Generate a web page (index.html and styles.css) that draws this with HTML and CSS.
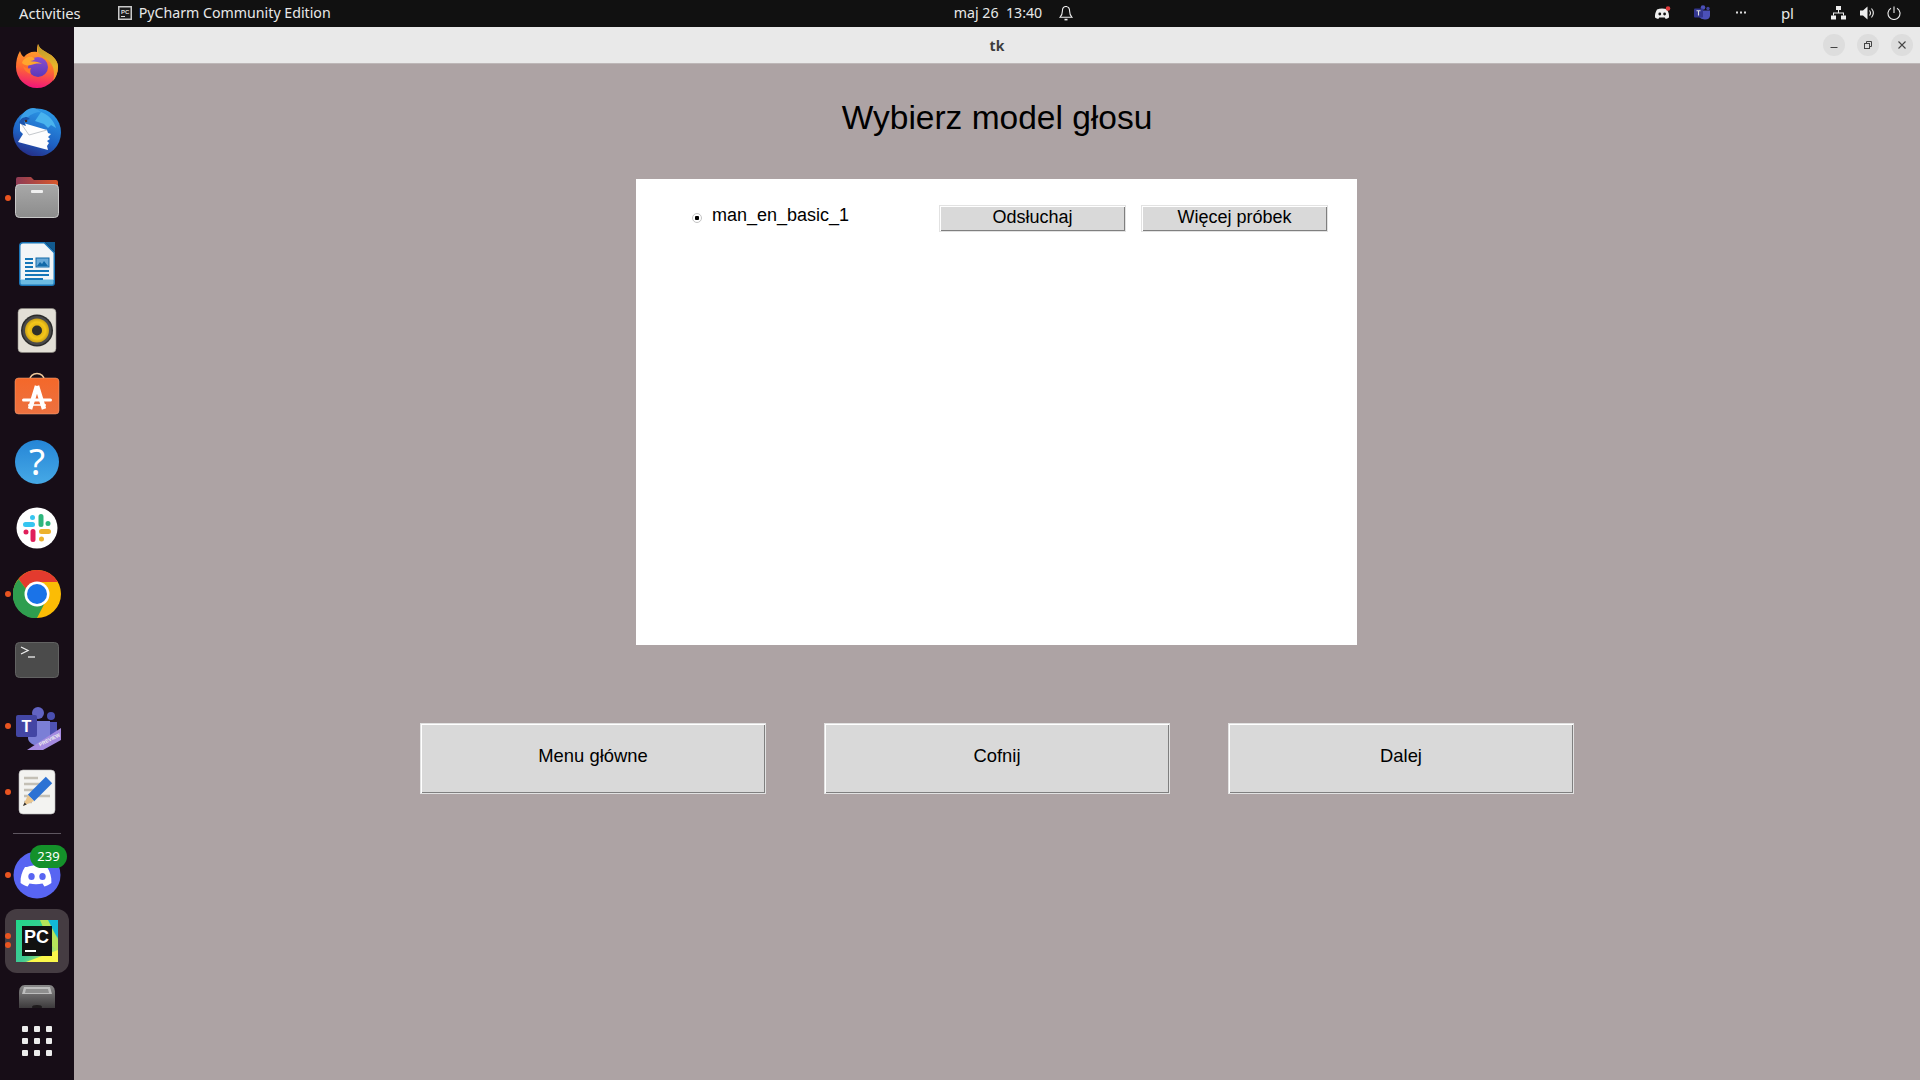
FILE: index.html
```html
<!DOCTYPE html>
<html lang="en">
<head>
    <meta charset="UTF-8">
    <meta name="viewport" content="width=device-width, initial-scale=1.0">
    <title>tk</title>
    <link rel="stylesheet" href="styles.css">
</head>
<body>
    <!-- Top bar -->
    <header class="topbar">
        <span class="activities">Activities</span>
        <svg class="app-glyph" width="14" height="14" viewBox="0 0 14 14">
            <rect width="14" height="14" fill="#c9c9c9"/>
            <rect x="1.500" y="1.500" width="11" height="11" fill="#1c1c1c"/>
            <text x="3" y="7.500" font-size="6" font-weight="700" fill="#ddd" font-family="Liberation Sans">PC</text>
            <rect x="3" y="10" width="4" height="1" fill="#ddd"/>
        </svg>
        <span class="app-name">PyCharm Community Edition</span>
        <span class="clock">maj 26&nbsp;&nbsp;13:40</span>
        <svg class="bell" width="14" height="16" viewBox="0 0 14 16" fill="none" stroke="#eee" stroke-width="1.100">
            <path d="M6 1.500h2M7 1.500c-2.600 0-3.600 2-3.600 4.500 0 3-1 5-2.400 6.300h12c-1.400-1.300-2.400-3.300-2.400-6.300 0-2.500-1-4.500-3.600-4.500z"/>
            <path d="M5.500 14.600h3" stroke-width="1.600"/>
        </svg>
        <div class="tray">
            <svg class="tray-discord" width="17" height="14" viewBox="0 0 17 14">
                <path d="M3 3.500c3-1.300 7-1.300 10 0 1.500 2.500 2.200 5 2 8-1.200.9-2.300 1.300-3.300 1.500l-.9-1.400h-5.600l-.9 1.400c-1-.2-2.100-.6-3.300-1.500-.2-3 .5-5.500 2-8z" fill="#eee"/>
                <circle cx="5.800" cy="8" r="1.400" fill="#111"/>
                <circle cx="10.600" cy="8" r="1.400" fill="#111"/>
                <circle cx="14" cy="2.500" r="2.300" fill="#e03c3c"/>
            </svg>
            <svg class="tray-teams" width="17" height="15" viewBox="0 0 17 15">
                <circle cx="9" cy="2.500" r="2.300" fill="#4b50b8"/>
                <circle cx="14" cy="3.500" r="1.700" fill="#3e429c"/>
                <path d="M5 5.500h11v5c0 2.500-2 4-4.500 4s-6.500-1-6.500-4z" fill="#4b50b8"/>
                <rect y="3.500" width="9" height="9" rx="1" fill="#33368f"/>
                <path d="M2.500 5.800h4M4.500 5.800v4.800" stroke="#ddd" stroke-width="1.100"/>
            </svg>
            <svg class="tray-more" width="10" height="3" viewBox="0 0 10 3" fill="#ddd">
                <rect width="2" height="2" y=".5"/><rect x="4" width="2" height="2" y=".5"/><rect x="8" width="2" height="2" y=".5"/>
            </svg>
            <span class="tray-lang">pl</span>
            <svg class="tray-net" width="15" height="14" viewBox="0 0 15 14" fill="#eee">
                <rect x="5" width="5" height="4"/><rect y="9.500" width="5" height="4"/><rect x="10" y="9.500" width="5" height="4"/>
                <path d="M7 4h1v2.500h5v3h-1v-2h-9v2h-1v-3h5z"/>
            </svg>
            <svg class="tray-vol" width="15" height="14" viewBox="0 0 15 14">
                <path d="M0 4.500h3l4.500-4v13l-4.500-4h-3z" fill="#eee"/>
                <path d="M9.500 4.500c1.200 1.500 1.200 3.500 0 5M11.500 2.500c2.300 2.800 2.300 6.200 0 9" fill="none" stroke="#eee" stroke-width="1.100"/>
            </svg>
            <svg class="tray-power" width="14" height="14" viewBox="0 0 14 14" fill="none" stroke="#eee" stroke-width="1.100">
                <path d="M4 2.300a6 6 0 1 0 6 0"/>
                <path d="M7 .5v6.500"/>
            </svg>
        </div>
    </header>

    <div class="desktop">
        <!-- Dock -->
        <nav class="dock">
            <div class="dock-item">
                <svg width="48" height="48" viewBox="0 0 48 48">
                    <defs>
                        <linearGradient id="ffBody" x1="0.600" y1="0" x2="0.450" y2="1">
                            <stop offset="0" stop-color="#ffb02e"/><stop offset="0.550" stop-color="#ff6f2e"/><stop offset="1" stop-color="#f0147a"/>
                        </linearGradient>
                        <linearGradient id="ffGold" x1="0" y1="0" x2="0" y2="1">
                            <stop offset="0" stop-color="#b8962c"/><stop offset="0.600" stop-color="#e8b52a"/><stop offset="1" stop-color="#ff8a2e"/>
                        </linearGradient>
                        <linearGradient id="ffCore" x1="0.500" y1="0" x2="0.500" y2="1">
                            <stop offset="0" stop-color="#8a4fd0"/><stop offset="1" stop-color="#5b38b8"/>
                        </linearGradient>
                    </defs>
                    <path d="M7 9c1 3 2 5 4 6 3-4 8-6 13-5 0-3 0-6 1-8 2 6 7 7 13 11 5 4 7 8 7 12A21 21 0 0 1 3 25c0-6 1-11 4-16z" fill="url(#ffBody)"/>
                    <path d="M25 2c2 6 7 7 13 11 5 4 7 8 7 12 0 6-2 10-5 14 2-7 1-14-3-19-4-4-9-5-12-10z" fill="url(#ffGold)"/>
                    <circle cx="25" cy="25" r="10" fill="url(#ffCore)"/>
                    <path d="M9 21c1-4 6-7 10-6l3 2c-1 1-3 2-5 2 3 1 8 0 12 3-4-1-8 0-11 1-4 1-7 0-9-2z" fill="#ffa62e"/>
                    <path d="M10 24c2 2 5 3 8 2-1 2-1 4 0 6-4-1-7-4-8-8z" fill="#ff7a2e"/>
                </svg>
            </div>
            <div class="dock-item">
                <svg width="48" height="48" viewBox="0 0 48 48">
                    <defs>
                        <linearGradient id="tbBody" x1="0.700" y1="0" x2="0.300" y2="1">
                            <stop offset="0" stop-color="#2c9be8"/><stop offset="0.600" stop-color="#1e62c4"/><stop offset="1" stop-color="#252b84"/>
                        </linearGradient>
                    </defs>
                    <circle cx="24" cy="24.500" r="24" fill="url(#tbBody)"/>
                    <path d="M7 12C9 5 14 0 20 0c3 0 5 2 8 4-5 0-10 2-13 5l-5 8z" fill="#3a9fe8"/>
                    <path d="M28 4c8 3 13 9 15 16l-5-3-3 3-4-4-9-3z" fill="#49b3ee"/>
                    <path d="M7 14l27 8 1 3 3 1-3 3 2 2-3 2 2 2-2 3 1 4-30-8 5-8-3-3z" fill="#fdfdfd"/>
                    <path d="M7 14l9 13 18-5" fill="none" stroke="#c4c8cc" stroke-width="1"/>
                    <path d="M6 15c1-4 4-6 8-6l3 2-6 2 2 5-3-1z" fill="#1c55ad"/>
                    <circle cx="13" cy="13" r="1.300" fill="#4a2a1c"/>
                </svg>
            </div>
            <div class="dock-item has-dot">
                <svg width="48" height="48" viewBox="0 0 48 48">
                    <defs>
                        <linearGradient id="folderTab" x1="0" y1="0" x2="1" y2="0">
                            <stop offset="0" stop-color="#8e3b55"/><stop offset="1" stop-color="#d9582c"/>
                        </linearGradient>
                        <linearGradient id="folderFace" x1="0" y1="0" x2="0" y2="1">
                            <stop offset="0" stop-color="#a8a8a8"/><stop offset="1" stop-color="#8c8c8c"/>
                        </linearGradient>
                    </defs>
                    <path d="M3 5a2 2 0 0 1 2-2h13l3 3h22a2 2 0 0 1 2 2v10H3z" fill="url(#folderTab)"/>
                    <rect x="2.500" y="10.500" width="43" height="33" rx="4" fill="url(#folderFace)" stroke="#c8c8c8" stroke-width="1"/>
                    <rect x="18" y="16" width="12" height="3" rx="1" fill="#f0f0f0"/>
                </svg>
            </div>
            <div class="dock-item">
                <svg width="48" height="48" viewBox="0 0 48 48">
                    <path d="M10 2h22l10 10v31a3 3 0 0 1-3 3H9a3 3 0 0 1-3-3V6a4 4 0 0 1 4-4z" fill="#1b76b8"/>
                    <path d="M10 3.500h21l9.500 9.500v27H7.500V6A2.500 2.500 0 0 1 10 3.500z" fill="#f2f5f7"/>
                    <path d="M7.500 39.500h33V43a1.500 1.500 0 0 1-1.500 1.500H9A1.500 1.500 0 0 1 7.500 43z" fill="#6dbbe2"/>
                    <path d="M32 2h10v10z" fill="#125a8f"/>
                    <rect x="23" y="18" width="13" height="9" fill="#6aaad8" stroke="#136aa8"/>
                    <path d="M24 26l3-4 2 2 2-3 4 5z" fill="#136aa8"/>
                    <path d="M12 19h8M12 23h8M12 27h8M12 31h24M12 35h24M12 39h18" stroke="#1576b8" stroke-width="1.800"/>
                </svg>
            </div>
            <div class="dock-item">
                <svg width="48" height="48" viewBox="0 0 48 48">
                    <defs>
                        <radialGradient id="rbCone">
                            <stop offset="0" stop-color="#c79a10"/><stop offset="0.700" stop-color="#f5c71a"/><stop offset="1" stop-color="#caa015"/>
                        </radialGradient>
                    </defs>
                    <rect x="5" y="2.500" width="38" height="44" rx="4" fill="#e3dfd6" stroke="#8a8880" stroke-width=".6"/>
                    <circle cx="24" cy="24.500" r="16" fill="#2b2b2b"/>
                    <circle cx="24" cy="24.500" r="14.500" fill="#4a4a4a"/>
                    <circle cx="24" cy="24.500" r="12" fill="url(#rbCone)"/>
                    <circle cx="24" cy="24.500" r="5" fill="#2f2f2a"/>
                </svg>
            </div>
            <div class="dock-item">
                <svg width="48" height="48" viewBox="0 0 48 48">
                    <defs>
                        <linearGradient id="storeBag" x1="0" y1="0" x2="0" y2="1">
                            <stop offset="0" stop-color="#f4682a"/><stop offset="1" stop-color="#ec7140"/>
                        </linearGradient>
                    </defs>
                    <path d="M16.500 9c0-10 15-10 15 0" fill="none" stroke="#eec79a" stroke-width="1.500"/>
                    <rect x="2" y="6" width="44" height="36" rx="3.500" fill="url(#storeBag)" stroke="#f5a883" stroke-width=".5"/>
                    <path d="M24 14L17 37M24 14l7 23" stroke="#fff" stroke-width="4.500" fill="none" stroke-linejoin="bevel"/>
                    <path d="M10.500 28h27" stroke="#fff" stroke-width="3" stroke-linecap="round"/>
                    <path d="M15 33h18" stroke="#fff" stroke-width="1.500"/>
                </svg>
            </div>
            <div class="dock-item">
                <svg width="64" height="64" viewBox="-8 -8 64 64">
                    <defs>
                        <linearGradient id="helpBall" x1="0" y1="0" x2="0" y2="1">
                            <stop offset="0" stop-color="#2585d6"/><stop offset="1" stop-color="#46a9e6"/>
                        </linearGradient>
                    </defs>
                    <circle cx="24" cy="24" r="22" fill="url(#helpBall)"/>
                    <text x="24" y="37" text-anchor="middle" font-size="37" fill="#fff" font-family="Noto Sans, sans-serif">?</text>
                </svg>
            </div>
            <div class="dock-item">
                <svg width="48" height="48" viewBox="0 0 48 48" fill="none" stroke-linecap="round" stroke-width="5">
                    <circle cx="24" cy="24" r="20.500" fill="#fff"/>
                    <path d="M19.500 20.500h-7M19.500 13.500v.1" stroke="#36c5f0"/>
                    <path d="M28 12.500v8M35 19.500v.1" stroke="#2eb67d"/>
                    <path d="M28.500 27.500h7M28.500 35v.1" stroke="#ecb22e"/>
                    <path d="M20 27.500v8M13 28v.1" stroke="#e01e5a"/>
                </svg>
            </div>
            <div class="dock-item has-dot">
                <svg width="48" height="48" viewBox="0 0 48 48">
                    <circle cx="24" cy="24" r="24" fill="#fbbc05"/>
                    <path d="M24 0a24 24 0 0 1 20.800 12H24a12 12 0 0 0-11 7L5.500 9A24 24 0 0 1 24 0z" fill="#e33b2e"/>
                    <path d="M5.500 9L13 19l.5 11 11 6-9.500 11A24 24 0 0 1 5.500 9z" fill="#2f9e4f"/>
                    <path d="M13.500 30a12 12 0 0 0 18 3.500L24 48a24 24 0 0 1-9-1z" fill="#2f9e4f"/>
                    <circle cx="24" cy="24" r="12.500" fill="#fff"/>
                    <circle cx="24" cy="24" r="10" fill="#1a73e8"/>
                </svg>
            </div>
            <div class="dock-item">
                <svg width="48" height="48" viewBox="0 0 48 48">
                    <rect x="2.500" y="6.500" width="43" height="35" rx="4" fill="#4b4b4b" stroke="#626262"/>
                    <path d="M8 11l7 3.500-7 3.500" fill="none" stroke="#eee" stroke-width="1.300"/>
                    <path d="M15 21h7" stroke="#eee" stroke-width="1.300"/>
                </svg>
            </div>
            <div class="dock-item has-dot">
                <svg width="48" height="48" viewBox="0 0 48 48">
                    <circle cx="25" cy="11" r="6" fill="#6264c4"/>
                    <circle cx="38" cy="14" r="4" fill="#4a4fb0"/>
                    <path d="M31 20h13v16l-13 6z" fill="#4f53b3"/>
                    <path d="M16 19h21v17c0 5-4 8-10.500 8S15 40 15 36z" fill="#7b7fd6"/>
                    <path d="M14 48l34-22v12l-18 10z" fill="#a58be0"/>
                    <text transform="translate(27 44.500) rotate(-27)" font-size="5" font-weight="700" fill="#eee" font-family="Liberation Sans">PREVIEW</text>
                    <rect x="3" y="13" width="21" height="22" rx="2" fill="#4346a4"/>
                    <text x="13.500" y="30" text-anchor="middle" font-size="16" font-weight="700" fill="#fff" font-family="Liberation Sans">T</text>
                </svg>
            </div>
            <div class="dock-item has-dot">
                <svg width="48" height="48" viewBox="0 0 48 48">
                    <rect x="6" y="2" width="36" height="44" rx="4" fill="#f3f3f1" stroke="#bbb" stroke-width=".6"/>
                    <path d="M11 10h14M11 16h20M11 22h14M11 28h26M11 34h8" stroke="#c4c0b6" stroke-width="2.400"/>
                    <path d="M36 12L18 30" stroke="#2c72d4" stroke-width="9"/>
                    <path d="M15 27l6 6-11 5z" fill="#eac58d"/>
                    <path d="M10 38l1.500-3.500 2.200 2z" fill="#333"/>
                </svg>
            </div>
            <div class="dock-separator"></div>
            <div class="dock-item has-dot">
                <svg width="48" height="48" viewBox="0 0 48 48">
                    <circle cx="24" cy="24" r="23.500" fill="#5865f2"/>
                    <path d="M14 16c6-2.500 14-2.500 20 0 3 4.500 4.800 10 4.400 16-2.500 1.900-5 2.900-7 3.400l-1.900-2.800c-4.500 1-8.500 1-13 0l-1.900 2.800c-2-.5-4.500-1.500-7-3.400-.4-6 1.400-11.500 4.400-16z" fill="#fff"/>
                    <ellipse cx="18.500" cy="25.500" rx="3.200" ry="3.500" fill="#5865f2"/>
                    <ellipse cx="29.500" cy="25.500" rx="3.200" ry="3.500" fill="#5865f2"/>
                </svg>
                <span class="dock-badge">239</span>
            </div>
            <div class="dock-item dock-current has-two-dots">
                <svg width="42" height="42" viewBox="0 0 42 42">
                    <defs>
                        <linearGradient id="pcBack" x1="0" y1="0" x2="1" y2="1">
                            <stop offset="0" stop-color="#21d789"/><stop offset="0.550" stop-color="#3fc995"/><stop offset="1" stop-color="#fcf84a"/>
                        </linearGradient>
                    </defs>
                    <rect width="42" height="42" fill="url(#pcBack)"/>
                    <path d="M30 0h12v18z" fill="#12b8d6"/>
                    <path d="M24 0h8l10 20v12l-8-8z" fill="#b6e65a"/>
                    <path d="M10 42l32-12v12z" fill="#fcf84a"/>
                    <rect x="6" y="6" width="30" height="30" fill="#111"/>
                    <text x="8" y="23" font-size="18" font-weight="700" fill="#fff" font-family="Liberation Sans">PC</text>
                    <rect x="9" y="30" width="11" height="2" fill="#fff"/>
                </svg>
            </div>
            <div class="dock-item dock-clipped">
                <svg width="48" height="34" viewBox="0 0 48 34">
                    <defs>
                        <linearGradient id="trashFade" x1="0" y1="0" x2="0" y2="1">
                            <stop offset="0" stop-color="#8a8a8a"/><stop offset="1" stop-color="#3d3a3c"/>
                        </linearGradient>
                    </defs>
                    <path d="M6 19c0-5 2-8 6-8h24c4 0 6 3 6 8v15H6z" fill="url(#trashFade)"/>
                    <path d="M9 20l2-7h26l2 7z" fill="#bdbdbd"/>
                    <path d="M12 19l1-4h22l1 4z" fill="#8e8e8e"/>
                    <ellipse cx="24" cy="33" rx="5" ry="2" fill="#1e1a1c"/>
                </svg>
            </div>
            <div class="dock-grid">
                <span></span><span></span><span></span>
                <span></span><span></span><span></span>
                <span></span><span></span><span></span>
            </div>
        </nav>

        <div class="window">
            <div class="titlebar">
                <span class="title">tk</span>
                <div class="win-controls">
                    <button class="win-btn">
                        <svg width="12" height="12" viewBox="0 0 12 12"><path d="M2.500 8.500h7" stroke="#444" stroke-width="1"/></svg>
                    </button>
                    <button class="win-btn">
                        <svg width="12" height="12" viewBox="0 0 12 12" fill="none" stroke="#444" stroke-width="1">
                            <rect x="2.500" y="4.500" width="5" height="5"/><path d="M4.500 4.500v-2h5v5h-2"/>
                        </svg>
                    </button>
                    <button class="win-btn">
                        <svg width="12" height="12" viewBox="0 0 12 12"><path d="M2.500 2.500l7 7M9.500 2.500l-7 7" stroke="#444" stroke-width="1.100"/></svg>
                    </button>
                </div>
            </div>

            <main class="content">
                <h1>Wybierz model głosu</h1>

                <section class="voice-panel">
                    <div class="voice-row">
                        <span class="radio"></span>
                        <span class="voice-name">man_en_basic_1</span>
                        <div class="voice-actions">
                            <button class="tk-btn small">Odsłuchaj</button>
                            <button class="tk-btn small">Więcej próbek</button>
                        </div>
                    </div>
                </section>

                <div class="nav-buttons">
                    <button class="tk-btn big">Menu główne</button>
                    <button class="tk-btn big">Cofnij</button>
                    <button class="tk-btn big">Dalej</button>
                </div>
            </main>
        </div>
    </div>
</body>
</html>
```

FILE: styles.css
```css
html, body {
    height: 100%;
}
body {
    margin: 0;
    display: flex;
    flex-direction: column;
    overflow: hidden;
    font-family: "Noto Sans", sans-serif;
    background: #ada3a4;
}

/* top bar */
.topbar {
    height: 27px;
    flex: none;
    display: flex;
    align-items: center;
    padding: 0 0 2px 19px;
    box-sizing: border-box;
    background: #111111;
    color: #e8e8e8;
    font-size: 14.2px;
}
.activities {
    font-size: 14.8px;
}
.app-glyph {
    margin-left: 37px;
}
.app-name {
    margin-left: 7px;
}
.clock {
    margin-left: 623px;
}
.bell {
    margin-left: 17px;
}
.tray {
    margin-left: auto;
    display: flex;
    align-items: center;
    padding-right: 19px;
}
.tray-discord {
    margin-right: 2px;
}
.tray-teams {
    margin-left: 21px;
}
.tray-more {
    margin-left: 25px;
}
.tray-lang {
    margin-left: 35px;
    font-size: 15px;
}
.tray-net {
    margin-left: 37px;
}
.tray-vol {
    margin-left: 14px;
}
.tray-power {
    margin-left: 12px;
}

.desktop {
    flex: 1;
    display: flex;
    min-height: 0;
}

/* dock */
.dock {
    width: 74px;
    flex: none;
    padding-top: 6px;
    box-sizing: border-box;
    background: #170d17;
    display: flex;
    flex-direction: column;
    align-items: center;
}
.dock-item {
    position: relative;
    width: 64px;
    height: 66px;
    flex: none;
    display: flex;
    align-items: center;
    justify-content: center;
}
.has-dot::before,
.has-two-dots::before,
.has-two-dots::after {
    content: "";
    position: absolute;
    left: 0;
    top: 30px;
    width: 6px;
    height: 6px;
    border-radius: 50%;
    background: #e95420;
}
.has-two-dots::before {
    top: 24px;
}
.has-two-dots::after {
    top: 33px;
}
.dock-separator {
    width: 48px;
    height: 1px;
    margin: 8px 0;
    background: #5e5660;
    flex: none;
}
.dock-badge {
    position: absolute;
    top: 3px;
    left: 25px;
    width: 37px;
    height: 23px;
    border-radius: 12px;
    background: #14912a;
    color: #fff;
    font-size: 13px;
    line-height: 23px;
    text-align: center;
}
.dock-current {
    height: 64px;
    margin: 1px 0;
    background: #453c42;
    border-radius: 12px;
}
.dock-clipped {
    height: 34px;
    align-items: flex-end;
}
.dock-grid {
    margin-top: 18px;
    display: grid;
    grid-template-columns: repeat(3, 6px);
    gap: 6px;
}
.dock-grid span {
    height: 6px;
    border-radius: 1px;
    background: #ececec;
}

/* window */
.window {
    flex: 1;
    display: flex;
    flex-direction: column;
    min-width: 0;
}
.titlebar {
    height: 36px;
    flex: none;
    position: relative;
    display: flex;
    align-items: center;
    justify-content: center;
    background: #e9e9e9;
    border-bottom: 1px solid #bdb7b7;
}
.title {
    font-size: 14px;
    font-weight: 700;
    color: #3d3d3d;
}
.win-controls {
    position: absolute;
    right: 7px;
    top: 7px;
    display: flex;
    gap: 12px;
}
.win-btn {
    width: 22px;
    height: 22px;
    padding: 0;
    border: none;
    border-radius: 50%;
    background: #dddddd;
    display: flex;
    align-items: center;
    justify-content: center;
}

/* tk content */
.content {
    flex: 1;
    display: flex;
    flex-direction: column;
    align-items: center;
    font-family: "Liberation Sans", Arial, sans-serif;
    color: #000;
}
h1 {
    margin: 31px 0 0;
    font-size: 33.5px;
    line-height: 46px;
    font-weight: 400;
}
.voice-panel {
    width: 721px;
    height: 466px;
    margin: 38px 1px 0 0;
    background: #ffffff;
    box-sizing: border-box;
    padding: 26px 29px 0 56px;
}
.voice-row {
    display: flex;
    align-items: flex-start;
}
.radio {
    width: 8px;
    height: 8px;
    margin-top: 8px;
    border: 1px solid #c4c4c4;
    border-radius: 50%;
    background: radial-gradient(circle, #000 0 2px, #fff 2.500px);
}
.voice-name {
    margin-left: 10px;
    font-size: 18px;
    line-height: 20px;
}
.voice-actions {
    margin-left: auto;
    display: flex;
    gap: 15px;
}
.tk-btn {
    padding: 0 0 3px;
    box-sizing: border-box;
    font-family: inherit;
    color: #000;
    background: #d9d9d9;
    border: 1px solid #e2e2e2;
    box-shadow: inset 1px 1px 0 #ffffff, inset -1px -1px 0 #7f7f7f;
}
.small {
    width: 187px;
    height: 27px;
    font-size: 18px;
}
.big {
    width: 346px;
    height: 71px;
    font-size: 18.4px;
    padding-bottom: 5px;
}
.nav-buttons {
    margin-top: 78px;
    display: flex;
    gap: 58px;
}
```
